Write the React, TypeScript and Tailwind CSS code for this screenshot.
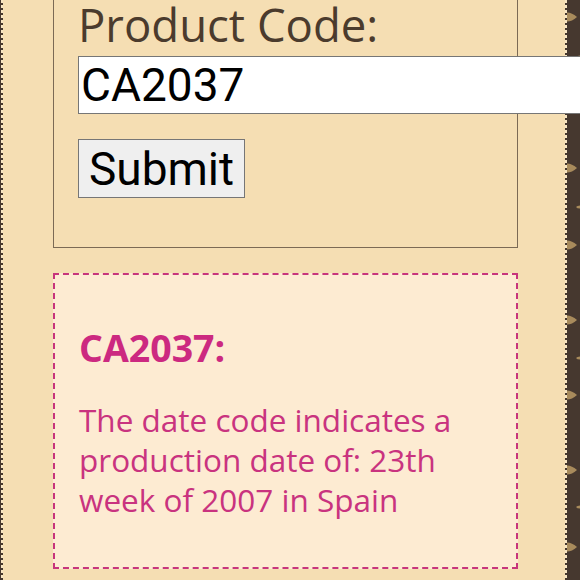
const leaves = [17, 92, 168, 245, 320, 395, 470, 547];
const buds = [57, 207, 358, 507];

function RightEdge() {
  return (
    <div className="flex h-full shrink-0">
      <div className="w-[2px] bg-[repeating-linear-gradient(to_bottom,#f8e6c3_0_3px,#46382f_3px_5px)]" />
      <svg width="13" height="580" viewBox="0 0 13 580" className="block bg-[#46382f]">
        {leaves.map((y) => (
          <path
            key={y}
            d={`M0 ${y - 4.5} Q5 ${y - 4.5} 10 ${y} Q5 ${y + 4.5} 0 ${y + 4.5} Z`}
            fill="#a88b5c"
          />
        ))}
        {buds.map((y) => (
          <path key={y} d={`M13 ${y - 1.5} Q10 ${y - 1.5} 9 ${y} Q10 ${y + 1.5} 13 ${y + 1.5} Z`} fill="#a88b5c" />
        ))}
      </svg>
    </div>
  );
}

export default function App() {
  return (
    <div className="flex h-[580px] w-[580px] overflow-hidden bg-[#46382f]">
      <div className="flex w-[3px] shrink-0">
        <div className="w-px" />
        <div className="w-[2px] bg-[repeating-linear-gradient(to_bottom,#f8e6c3_0_3px,#46382f_3px_5px)]" />
      </div>

      <main className="w-[562px] min-w-0 shrink-0 bg-[#f5deb3] font-['Open_Sans',sans-serif]">
        <form
          onSubmit={(e) => e.preventDefault()}
          className="mx-[50px] w-[465px] border border-t-0 border-[#7b6a55] px-6 pb-[49px]"
        >
          <label htmlFor="code" className="block text-[45.5px] leading-[48px] text-[#4b3b2d]">
            Product Code:
          </label>
          <input
            id="code"
            defaultValue="CA2037"
            className="relative z-10 mt-2 block h-[58px] w-[620px] border border-[#767676] bg-white px-[2px] font-['Roboto',sans-serif] text-[46px] text-black outline-none"
          />
          <button
            type="submit"
            className="mt-[25px] block h-[59px] border border-[#767676] bg-[#efefef] px-[10px] font-['Roboto',sans-serif] text-[46px] leading-none text-black"
          >
            Submit
          </button>
        </form>

        <section className="mx-[50px] mt-[25px] w-[465px] border-2 border-dashed border-[#c7357c] bg-[#fdebd2] px-6 pt-[51px] pb-[47px]">
          <h2 className="text-[37.5px] leading-[44px] font-bold text-[#cc2980]">CA2037:</h2>
          <p className="mt-[30px] text-[31.5px] leading-[40px] text-[#c9337f]">
            The date code indicates a production date of: 23th week of 2007 in Spain
          </p>
        </section>
      </main>

      <RightEdge />
    </div>
  );
}
